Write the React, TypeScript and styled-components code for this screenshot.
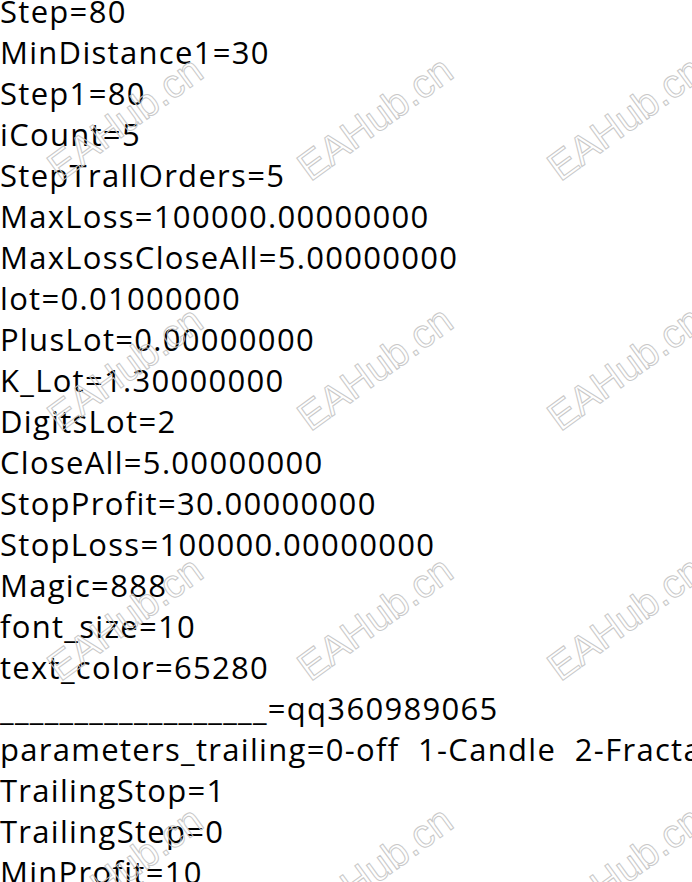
import React from "react";
import styled, { createGlobalStyle } from "styled-components";

const Global = createGlobalStyle`
  html, body { margin: 0; padding: 0; background: #ffffff; }
  body { overflow: hidden; width: 692px; height: 882px; }
  #root { position: relative; width: 692px; height: 882px; overflow: hidden; }
`;

const Listing = styled.div`
  display: flex;
  flex-direction: column;
  margin-top: -9px;
  font-family: "Open Sans", "Noto Sans", sans-serif;
  font-size: 31px;
  line-height: 41px;
  color: #000000;
  letter-spacing: 1.3px;
`;

const Line = styled.div`
  white-space: pre;
`;

const Overlay = styled.div`
  position: absolute;
  top: -7px;
  left: 0;
  right: 0;
  bottom: 0;
  pointer-events: none;
  display: grid;
  grid-template-columns: repeat(3, 250px);
  grid-auto-rows: 250px;
`;

const Cell = styled.div`
  display: flex;
  align-items: center;
  justify-content: center;
`;

const Mark = styled.span`
  display: inline-block;
  transform: rotate(-36deg);
  font-family: "Liberation Sans", Arial, sans-serif;
  font-size: 40px;
  color: transparent;
  -webkit-text-stroke: 1px #c8c8c8;
  white-space: nowrap;
`;

const lines = [
  "Step=80",
  "MinDistance1=30",
  "Step1=80",
  "iCount=5",
  "StepTrallOrders=5",
  "MaxLoss=100000.00000000",
  "MaxLossCloseAll=5.00000000",
  "lot=0.01000000",
  "PlusLot=0.00000000",
  "K_Lot=1.30000000",
  "DigitsLot=2",
  "CloseAll=5.00000000",
  "StopProfit=30.00000000",
  "StopLoss=100000.00000000",
  "Magic=888",
  "font_size=10",
  "text_color=65280",
  "__________________=qq360989065",
  "parameters_trailing=0-off  1-Candle  2-Fractal  3-Velocity",
  "TrailingStop=1",
  "TrailingStep=0",
  "MinProfit=10",
];

export default function App() {
  return (
    <>
      <Global />
      <Listing>
        {lines.map((l, i) => (
          <Line key={i}>{l}</Line>
        ))}
      </Listing>
      <Overlay>
        {Array.from({ length: 12 }).map((_, i) => (
          <Cell key={i}>
            <Mark>EAHub.cn</Mark>
          </Cell>
        ))}
      </Overlay>
    </>
  );
}
